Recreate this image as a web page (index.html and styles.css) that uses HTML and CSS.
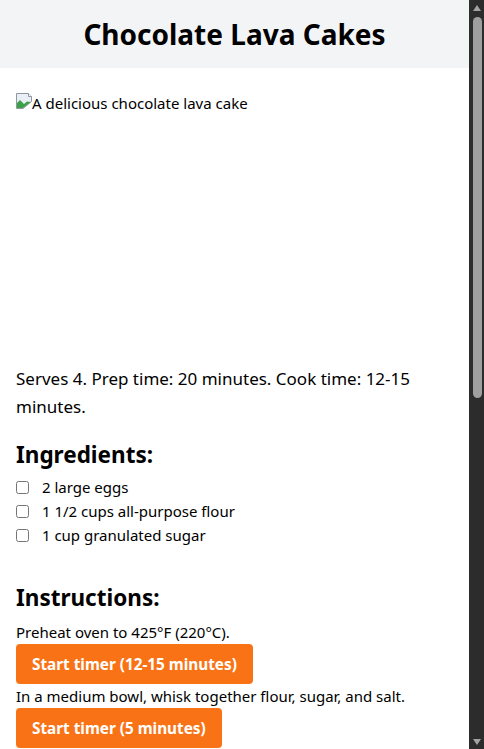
FILE: index.html
```html
<!DOCTYPE html>
<html lang="en">

<head>
    <meta charset="utf-8" />
    <meta name="viewport" content="width=device-width, initial-scale=1" />

    <title>Chocolate Lava Cakes</title>

    <link rel="stylesheet" href="styles.css">
</head>

<body>
    <div class="page">
        <header class="top">
            <h1>Chocolate Lava Cakes</h1>
        </header>
        <main>
            <div class="photo">
                <svg class="broken" width="16" height="16" viewBox="0 0 16 16">
                    <path d="M0.5 0.5h12l3 3v5L7 15.5H0.5z" fill="#e9eff5" stroke="#8e98a2" />
                    <path d="M1 15V10l3-3 4 4 3-2.5L14.8 9 7 15z" fill="#3e9f4a" />
                    <path d="M12.5 0.5v3h3" fill="#fff" stroke="#8e98a2" />
                </svg><span>A delicious chocolate lava cake</span>
            </div>
            <p class="meta">Serves 4. Prep time: 20 minutes. Cook time: 12-15 minutes.</p>

            <h2>Ingredients:</h2>
            <ul class="ingredients">
                <li><label><input type="checkbox"> 2 large eggs</label></li>
                <li><label><input type="checkbox"> 1 1/2 cups all-purpose flour</label></li>
                <li><label><input type="checkbox"> 1 cup granulated sugar</label></li>
            </ul>

            <h2 class="steps-title">Instructions:</h2>
            <ol class="steps">
                <li>
                    <p>Preheat oven to 425°F (220°C).</p>
                    <button>Start timer (12-15 minutes)</button>
                </li>
                <li>
                    <p>In a medium bowl, whisk together flour, sugar, and salt.</p>
                    <button>Start timer (5 minutes)</button>
                </li>
            </ol>
        </main>
    </div>
    <div class="scrollbar" aria-hidden="true">
        <span class="arrow up"></span>
        <span class="thumb"></span>
        <span class="arrow down"></span>
    </div>
</body>

</html>
```

FILE: styles.css
```css
body {
    margin: 0;
    height: 100vh;
    display: flex;
    overflow: hidden;
    font-family: 'Noto Sans', 'Open Sans', sans-serif;
    color: #000;
    background: #fff;
}

.page {
    flex: 1;
    min-width: 0;
    overflow: hidden;
}

/* the window's scroll bar */
.scrollbar {
    width: 15px;
    flex-shrink: 0;
    background: #2c2c2c;
    display: flex;
    flex-direction: column;
    align-items: center;
}

.arrow {
    height: 17px;
    flex-shrink: 0;
    display: flex;
    align-items: center;
    justify-content: center;
}

.arrow::before {
    content: "";
    border-left: 4px solid transparent;
    border-right: 4px solid transparent;
}

.up::before {
    border-bottom: 6px solid #a3a3a3;
    margin-top: -1px;
}

.down::before {
    border-top: 6px solid #a3a3a3;
    margin-top: 2px;
}

.thumb {
    width: 9px;
    height: 381px;
    margin-left: 1px;
    background: #9f9f9f;
    border-radius: 5px;
}

.scrollbar .down {
    margin-top: auto;
}

.top {
    background: #f3f4f6;
    padding: 16px;
    text-align: center;
}

h1 {
    margin: 0;
    font-size: 28px;
    line-height: 36px;
    font-weight: 700;
}

main {
    padding: 16px;
}

.photo {
    height: 257px;
    padding-top: 9px;
    box-sizing: border-box;
    margin-bottom: 24px;
    font-size: 15px;
    line-height: 24px;
    display: flex;
    align-items: flex-start;
}

.broken {
    flex-shrink: 0;
}

.photo span {
    margin-top: -2px;
}

.meta {
    margin: 0 0 18px;
    font-size: 17px;
    line-height: 28px;
}

h2 {
    margin: 0 0 4px;
    font-size: 22.5px;
    line-height: 32px;
    font-weight: 700;
}

.ingredients {
    list-style: none;
    margin: 0 0 35px;
    padding: 0;
    font-size: 15px;
    line-height: 24px;
}

.ingredients input {
    margin: 0 9px 0 0;
    width: 13px;
    height: 13px;
    vertical-align: -1px;
}

.steps-title {
    margin-bottom: 6px;
}

.steps {
    list-style: none;
    margin: 0;
    padding: 0;
    font-size: 15px;
    line-height: 24px;
}

.steps p {
    margin: 0;
}

.steps button {
    background: #f97316;
    color: #fff;
    border: 0;
    border-radius: 4px;
    padding: 8px 16px;
    font-family: inherit;
    font-size: 15.3px;
    line-height: 24px;
    font-weight: 700;
    cursor: pointer;
}
```
